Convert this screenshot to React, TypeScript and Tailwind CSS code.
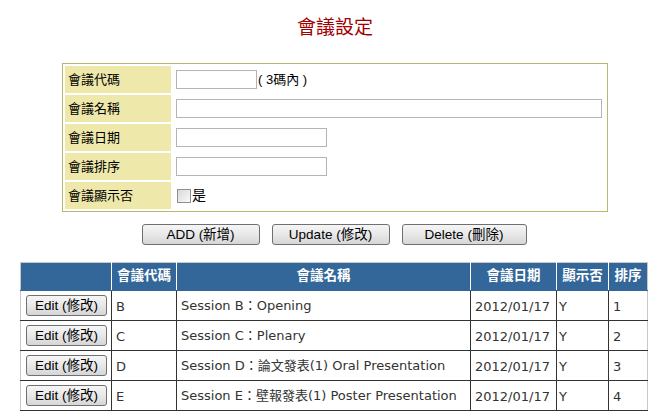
const cjk = '"Liberation Sans", "Noto Sans CJK TC", sans-serif';
const verdana = '"DejaVu Sans", "Noto Sans CJK TC", sans-serif';

interface Meeting {
  code: string;
  name: string;
  date: string;
  show: string;
  order: number;
}

const meetings: Meeting[] = [
  { code: 'B', name: 'Session B：Opening', date: '2012/01/17', show: 'Y', order: 1 },
  { code: 'C', name: 'Session C：Plenary', date: '2012/01/17', show: 'Y', order: 2 },
  { code: 'D', name: 'Session D：論文發表(1) Oral Presentation', date: '2012/01/17', show: 'Y', order: 3 },
  { code: 'E', name: 'Session E：壁報發表(1) Poster Presentation', date: '2012/01/17', show: 'Y', order: 4 },
];

function GrayButton({ label, className }: { label: string; className: string }) {
  return (
    <button
      className={`h-[21px] rounded-[3px] border border-[#707070] bg-gradient-to-b from-[#f6f6f6] via-[#e8e8e8] to-[#d6d6d6] text-[13.5px] leading-none text-black ${className}`}
      style={{ fontFamily: cjk }}
    >
      {label}
    </button>
  );
}

function FormRow({ label, children }: { label: string; children: React.ReactNode }) {
  return (
    <tr>
      <td className="h-[27px] w-[106px] bg-[#eee8aa] pl-[3px] align-middle text-[13px] text-black">
        {label}
      </td>
      <td className="h-[27px] pl-[3px] align-middle text-[13px] text-black">{children}</td>
    </tr>
  );
}

export default function App() {
  return (
    <div className="w-[670px] bg-white" style={{ fontFamily: cjk }}>
      <h1 className="pt-[14px] pb-[21px] text-center text-[19px] leading-[28px] font-normal text-[#a00000]">
        會議設定
      </h1>

      <table
        className="mx-auto w-[546px] border border-[#b8b86c]"
        style={{ borderCollapse: 'separate', borderSpacing: '2px' }}
      >
        <tbody>
          <FormRow label="會議代碼">
            <div className="flex items-center">
              <input className="h-[19px] w-[81px] border border-[#b4b4b4] bg-white" />
              <span className="ml-[1px]">(&nbsp;3碼內&nbsp;)</span>
            </div>
          </FormRow>
          <FormRow label="會議名稱">
            <input className="block h-[19px] w-[426px] border border-[#b4b4b4] bg-white" />
          </FormRow>
          <FormRow label="會議日期">
            <input className="block h-[19px] w-[151px] border border-[#b4b4b4] bg-white" />
          </FormRow>
          <FormRow label="會議排序">
            <input className="block h-[19px] w-[151px] border border-[#b4b4b4] bg-white" />
          </FormRow>
          <FormRow label="會議顯示否">
            <label className="flex items-center pl-[1px]">
              <span className="h-[14px] w-[14px] border border-[#8f8f8f] bg-gradient-to-br from-[#d8d8d8] to-[#fbfbfb]" />
              <span className="ml-[1px] text-[14px]">是</span>
            </label>
          </FormRow>
        </tbody>
      </table>

      <div className="mt-[12px] flex justify-center gap-[12px] pr-[2px]">
        <GrayButton label="ADD (新增)" className="w-[118px]" />
        <GrayButton label="Update (修改)" className="w-[118px]" />
        <GrayButton label="Delete (刪除)" className="w-[125px]" />
      </div>

      <table
        className="mt-[17px] ml-[20px] w-[627px] table-fixed border-collapse text-[13px] text-[#333]"
        style={{ fontFamily: verdana }}
      >
        <colgroup>
          <col className="w-[91px]" />
          <col className="w-[65px]" />
          <col className="w-[294px]" />
          <col className="w-[86px]" />
          <col className="w-[52px]" />
          <col className="w-[39px]" />
        </colgroup>
        <thead>
          <tr className="bg-[#336699] text-white" style={{ fontFamily: cjk }}>
            <th className="h-[28px] border border-t-[#c8c8c8] border-l-[#c8c8c8] border-r-white border-b-[#336699]"></th>
            <th className="h-[28px] border border-t-[#c8c8c8] border-x-white border-b-[#336699] text-[13.5px] font-bold">會議代碼</th>
            <th className="h-[28px] border border-t-[#c8c8c8] border-x-white border-b-[#336699] text-[13.5px] font-bold">會議名稱</th>
            <th className="h-[28px] border border-t-[#c8c8c8] border-x-white border-b-[#336699] text-[13.5px] font-bold">會議日期</th>
            <th className="h-[28px] border border-t-[#c8c8c8] border-x-white border-b-[#336699] text-[13.5px] font-bold">顯示否</th>
            <th className="h-[28px] border border-t-[#c8c8c8] border-l-white border-r-[#c8c8c8] border-b-[#336699] text-[13.5px] font-bold">排序</th>
          </tr>
        </thead>
        <tbody>
          {meetings.map((m) => (
            <tr key={m.code}>
              <td className="h-[30px] border border-l-[#c8c8c8] border-r-[#333] border-y-[#333] pl-[5px] align-middle">
                <GrayButton label="Edit (修改)" className="block w-[81px]" />
              </td>
              <td className="h-[30px] border border-[#333] pl-[4px] pt-[2px] whitespace-nowrap">{m.code}</td>
              <td className="h-[30px] border border-[#333] pl-[4px] whitespace-nowrap">{m.name}</td>
              <td className="h-[30px] border border-[#333] pl-[4px] pt-[2px] whitespace-nowrap">{m.date}</td>
              <td className="h-[30px] border border-[#333] pl-[2px] pt-[2px] whitespace-nowrap">{m.show}</td>
              <td className="h-[30px] border border-y-[#333] border-l-[#333] border-r-[#c8c8c8] pl-[4px] pt-[2px] whitespace-nowrap">
                {m.order}
              </td>
            </tr>
          ))}
        </tbody>
      </table>
    </div>
  );
}
